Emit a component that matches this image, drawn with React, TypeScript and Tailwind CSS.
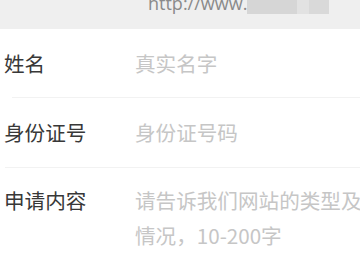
import React from "react";

export default function App() {
  const cjk = { fontFamily: '"Noto Sans CJK SC", "Noto Sans", sans-serif' };
  return (
    <div className="w-[360px] h-[270px] overflow-hidden bg-white" style={cjk}>
      <div className="h-[29px] bg-[#efefef] flex items-start overflow-hidden">
        <div className="flex items-center -mt-[9px] ml-[148px]">
          <span className="text-[18px] leading-[24px] text-[#8a8a8a]" style={{ fontFamily: '"Open Sans", "Liberation Sans", sans-serif' }}>
            http://www.
          </span>
          <div className="flex h-[22px] w-[82px]">
            <div className="w-[50px] bg-[#d6d6d6]" />
            <div className="w-[12px] bg-[#e2e2e2]" />
            <div className="w-[20px] bg-[#d9d9d9]" />
          </div>
        </div>
      </div>
      <div className="ml-[12px] h-[69px] border-b border-[#f2f2f2] flex items-center">
        <span className="w-[131px] -ml-[8px] text-[20.6px] text-[#383838]">姓名</span>
        <span className="text-[20.6px] text-[#c6c6c6]">真实名字</span>
      </div>
      <div className="ml-[5px] h-[70px] border-b border-[#f2f2f2] flex items-center">
        <span className="w-[131px] -ml-[1px] text-[20.6px] text-[#383838]">身份证号</span>
        <span className="text-[20.6px] text-[#c6c6c6]">身份证号码</span>
      </div>
      <div className="flex pt-[15px] pl-[4px]">
        <span className="w-[131px] shrink-0 text-[20.6px] leading-[35px] text-[#383838]">申请内容</span>
        <div className="text-[20.6px] leading-[35px] text-[#c6c6c6] whitespace-nowrap">
          <div>请告诉我们网站的类型及运营</div>
          <div>情况，10-200字</div>
        </div>
      </div>
    </div>
  );
}
